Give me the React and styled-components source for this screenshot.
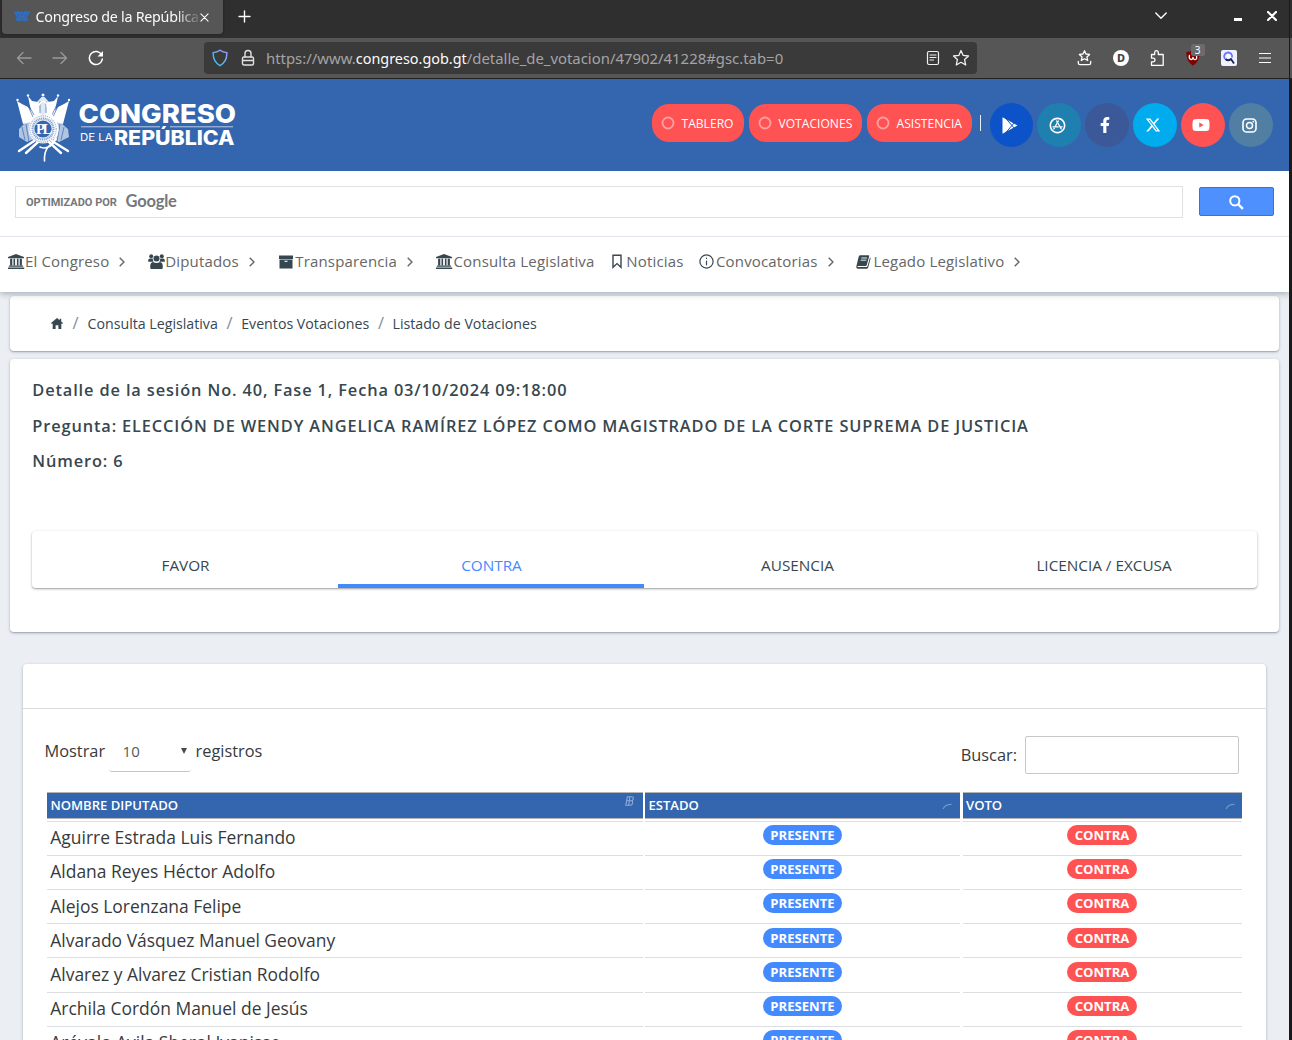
import React from 'react';
import styled, { createGlobalStyle, css } from 'styled-components';
import { FaFacebookF, FaYoutube } from 'react-icons/fa';
import { FaXTwitter } from 'react-icons/fa6';
import { RiAppStoreLine } from 'react-icons/ri';

const Global = createGlobalStyle`
  * { box-sizing: border-box; }
  html, body { margin: 0; height: 1040px; overflow: hidden; background: #1c1c1c; }
  svg { display: block; flex: none; }
`;

const Window = styled.div`
  width: 1292px;
  height: 1040px;
  overflow: hidden;
  font-family: "Open Sans", "Noto Sans", sans-serif;
`;

/* ---------- browser chrome ---------- */
const edge = 'linear-gradient(to right, transparent 1289px, #1a1a1a 1289px, #1a1a1a 1290px, transparent 1290px)';
const TabStrip = styled.div`
  height: 38px;
  display: flex;
  align-items: flex-start;
  background: ${edge}, #2f2f2f;
  color: #fbfbfe;
  font-family: "Noto Sans", sans-serif;
`;
const BrowserTab = styled.div`
  width: 221px;
  height: 34px;
  margin-left: 2px;
  padding: 0 13px 0 12px;
  display: flex;
  align-items: center;
  background: #565656;
  border-radius: 0 0 4px 4px;
  box-shadow: 0 0 3px rgba(0, 0, 0, 0.4);
`;
const TabTitle = styled.span`
  width: 162px;
  margin-left: 5.5px;
  margin-right: 2.5px;
  overflow: hidden;
  white-space: nowrap;
  font-size: 14.3px;
  letter-spacing: -0.27px;
  line-height: 20px;
  mask-image: linear-gradient(to right, #000 140px, transparent 166px);
`;
const NewTab = styled.div`
  margin: 10px 0 0 15px;
`;
const StripControls = styled.div`
  margin: 11px 15px 0 auto;
  display: flex;
  align-items: center;
`;
const Minimize = styled.span`
  width: 8px;
  height: 3px;
  margin: 6px 25px 0 67px;
  background: #fff;
`;
const Toolbar = styled.div`
  height: 41px;
  display: flex;
  align-items: center;
  background: ${edge}, #565656;
  border-bottom: 1px solid #222;
  font-family: "Noto Sans", sans-serif;
`;
const NavButtons = styled.div`
  width: 204px;
  padding-left: 16px;
  display: flex;
  align-items: center;
  gap: 20px;
`;
const UrlBar = styled.div`
  width: 773px;
  height: 32px;
  padding: 0 7px 0 8px;
  display: flex;
  align-items: center;
  gap: 13px;
  background: #3a3a3a;
  border-radius: 4px;
`;
const UrlText = styled.div`
  flex: 1;
  margin-left: -2px;
  font-size: 14.9px;
  line-height: 22px;
  color: #a4a4a6;
  white-space: nowrap;
`;
const UrlHost = styled.span`
  color: #fbfbfe;
  font-size: 14.4px;
`;
const UrlIcons = styled.div`
  display: flex;
  align-items: center;
  gap: 12px;
`;
const Extensions = styled.div`
  padding-left: 89.5px;
  display: grid;
  grid-template-columns: repeat(6, 36px);
  align-items: center;
  justify-items: center;
`;
const Blocker = styled.div`
  position: relative;
  width: 18px;
  height: 18px;
`;
const BlockCount = styled.span`
  position: absolute;
  left: 7px;
  top: -5px;
  width: 14px;
  height: 12px;
  border-radius: 2px;
  background: #6b6b6b;
  color: #fff;
  font-size: 10px;
  line-height: 12px;
  text-align: center;
`;

/* ---------- page ---------- */
const Page = styled.div`
  width: 1292px;
  height: 961px;
  background: #ebeef3;
  border-right: 3px solid #1a1a1a;
  overflow: hidden;
`;
const Header = styled.header`
  height: 92px;
  padding: 0 16px 0 14px;
  display: flex;
  align-items: center;
  justify-content: space-between;
  background: #3366ae;
`;
const HeaderLinks = styled.div`
  display: flex;
  align-items: center;
`;
const Pill = styled.a`
  width: ${(p) => p.$w}px;
  height: 38px;
  margin: -4px 5px 0 0;
  padding-left: 9px;
  display: flex;
  align-items: center;
  gap: 7px;
  border-radius: 17px;
  background: #ff5252;
  color: #fff;
  font-size: 12.1px;
`;
const Divider = styled.span`
  width: 1.5px;
  height: 16px;
  margin: -4px 9px 0 3px;
  background: #e6eef8;
`;
const Circle = styled.a`
  width: ${(p) => (p.$first ? 43 : 44)}px;
  height: 44px;
  margin-left: ${(p) => (p.$first ? 0 : 4)}px;
  padding-right: 4px;
  display: flex;
  align-items: center;
  justify-content: center;
  border-radius: 50%;
  background: ${(p) => p.$bg};
  color: #fff;
`;

const SearchRow = styled.div`
  height: 65px;
  padding: 15px 15px 0;
  display: flex;
  gap: 16px;
  background: #fff;
`;
const SearchBox = styled.div`
  width: 1168px;
  height: 32px;
  padding-left: 10px;
  display: flex;
  align-items: center;
  border: 1px solid #dfe1e5;
  color: #74777b;
`;
const Powered = styled.span`
  width: 99.5px;
  font: 700 11px Roboto, sans-serif;
`;
const Google = styled.span`
  margin-top: -2px;
  font: 700 16.5px Lato, sans-serif;
  letter-spacing: -0.2px;
`;
const SearchButton = styled.div`
  width: 75px;
  height: 29px;
  margin-top: 1px;
  padding-top: 1px;
  display: flex;
  align-items: center;
  justify-content: center;
  border: 1px solid #2f74ea;
  border-radius: 2px;
  background: #4d90fe;
  color: #fff;
`;

const MenuBar = styled.nav`
  position: relative;
  height: 56px;
  padding: 0 0 6px 8px;
  display: flex;
  align-items: center;
  background: #fff;
  border-top: 1px solid #e4e6ee;
  box-shadow: 0 2px 6px rgba(43, 61, 81, 0.35);
  clip-path: inset(0 0 -12px 0);
`;
const MenuItem = styled.a`
  width: ${(p) => p.$w}px;
  display: flex;
  align-items: center;
  color: #666;
  font-size: 15px;
  letter-spacing: 0.16px;
  line-height: 20px;
  white-space: nowrap;
`;
const MenuLabel = styled.span`
  padding-bottom: 2px;
`;
const MenuIcon = styled.span`
  width: ${(p) => p.$w}px;
  color: #37474f;
`;
const MenuArrow = styled.span`
  margin-left: 10px;
`;

const Card = styled.section`
  margin: 0 10px;
  background: #fff;
  border-radius: 4px;
  box-shadow: 0 1px 3px rgba(43, 61, 81, 0.32), 0 1px 1px rgba(43, 61, 81, 0.18);
`;
const Crumbs = styled(Card)`
  height: 55px;
  margin-top: 4px;
  padding: 0 0 0 41px;
  display: flex;
  align-items: center;
  font-size: 14.2px;
  color: #37474f;
`;
const Slash = styled.span`
  width: ${(p) => p.$w}px;
  margin-top: -3px;
  padding-left: ${(p) => p.$pad}px;
  color: #868e96;
  font-size: 16.5px;
`;
const Crumb = styled.a`
  width: ${(p) => p.$w}px;
  white-space: nowrap;
`;

const Detail = styled(Card)`
  height: 273px;
  margin-top: 8px;
  padding: 20px 22px 0;
`;
const DetailLine = styled.h5`
  height: 22px;
  margin: 0 0 13.6px;
  padding-left: 0.3px;
  color: #37474f;
  font-size: 16.36px;
  font-weight: 600;
  letter-spacing: 0.872px;
  line-height: 22px;
  white-space: nowrap;
`;
const Tabs = styled.div`
  height: 57px;
  margin: 59px 0 0;
  display: grid;
  grid-template-columns: repeat(3, 306px) 1fr;
  border-radius: 4px;
  box-shadow: 0 1px 3px rgba(0, 0, 0, 0.28), 0 1px 1px rgba(0, 0, 0, 0.14);
`;
const Tab = styled.div`
  display: flex;
  align-items: center;
  justify-content: center;
  padding: 15px 0 0 1px;
  border-bottom: 4px solid transparent;
  color: #37474f;
  font-size: 15.3px;
  ${(p) => p.$active && css`
    color: #448aff;
    border-bottom-color: #448aff;
  `}
`;

const Results = styled(Card)`
  height: 420px;
  margin: 32px 23px 0;
`;
const ResultsHead = styled.div`
  height: 45px;
  border-bottom: 1px solid #dcdcdc;
`;
const Controls = styled.div`
  height: 83px;
  padding: 26px 27px 0 21.5px;
  display: flex;
  justify-content: space-between;
  color: #373a3c;
  font-size: 16.35px;
  line-height: 22px;
`;
const LengthPicker = styled.div`
  display: flex;
  padding-top: 5px;
`;
const Select = styled.div`
  width: 81.5px;
  height: 32px;
  margin: 0 5px 0 4px;
  padding: 0 3.5px 0 13.5px;
  display: flex;
  justify-content: space-between;
  border-bottom: 1px solid #c4c4c4;
  border-radius: 3px;
  color: #55595c;
  font-size: 15px;
  line-height: 22px;
`;
const Caret = styled.span`
  width: 0;
  height: 0;
  margin-top: 8px;
  border: 3.5px solid transparent;
  border-top: 6px solid #4a4a4a;
  border-bottom: 0;
`;
const Filter = styled.div`
  display: flex;
  align-items: center;
  height: 40px;
  gap: 8px;
`;
const FilterInput = styled.div`
  width: 214px;
  height: 38px;
  border: 1px solid #c8c8c8;
  border-radius: 2px;
`;

const columns = css`
  display: grid;
  grid-template-columns: 596px 315px 280px;
  column-gap: 2px;
  margin-left: 24px;
`;
const HeadRow = styled.div`
  ${columns}
  height: 29px;
`;
const HeadCell = styled.div`
  height: 27px;
  margin-left: ${(p) => (p.$last ? 1 : 0)}px;
  padding: 0 ${(p) => (p.$last ? 8 : 9)}px 1px ${(p) => (p.$last ? 3 : 3.4)}px;
  display: flex;
  align-items: center;
  justify-content: space-between;
  background: #3366ae;
  border-top: 1px solid #b5b5b5;
  border-bottom: 1px solid #b5b5b5;
  color: #fff;
  font-size: 13.1px;
  font-weight: 600;
  line-height: 18px;
`;
const BodyRow = styled.div`
  ${columns}
  height: 34.12px;
`;
const Cell = styled.div`
  height: 34.12px;
  margin-left: ${(p) => (p.$last ? 1 : 0)}px;
  padding: ${(p) => (p.$center ? '3.2px 0 0' : '3.3px 0 0 3.3px')};
  ${(p) => p.$last && 'padding-right: 1px;'}
  text-align: ${(p) => (p.$center ? 'center' : 'left')};
  border-top: 1px solid #dcdee1;
  color: #373a3c;
  font-size: 17.45px;
  line-height: 24px;
  white-space: nowrap;
`;
const Badge = styled.span`
  display: block;
  width: ${(p) => (p.$red ? 70 : 79)}px;
  height: 20px;
  margin: 0 auto;
  border-radius: 10px;
  background: ${(p) => (p.$red ? '#ff5252' : '#448aff')};
  color: #fff;
  font-size: 13.1px;
  font-weight: 700;
  line-height: 21px;
`;

/* ---------- drawings ---------- */
const line = { fill: 'none', stroke: 'currentColor', strokeLinecap: 'round', strokeLinejoin: 'round' };

const Emblem = () => (
  <g>
    <path fill="currentColor" d="M1 8 L6 11 L12 14 L20 24 L15 29 L7 31 Z M12 3 L16 8 L22 9 L25 23 L19 26 L15 18 Z M42 3 L38 8 L32 9 L29 23 L36 27 L39 18 Z M53 8 L48 11 L42 14 L34 24 L39 29 L47 31 Z" />
    <path fill="currentColor" opacity=".85" d="M25.5 4 L28.5 4 L33 9 L31 22 L23 22 L21 9 Z" />
    <path fill="currentColor" opacity=".62" d="M9 30 L15 27 L18 46 L11 49 L3 44 L3 36 Z M45 30 L39 27 L36 46 L43 49 L53 44 L52 36 Z" />
    <g stroke="#3366ae" strokeWidth=".9" opacity=".75" fill="none">
      <path d="M6 34 L9 47 M10 31 L13 49 M48 34 L45 47 M44 31 L41 49 M11 9 L18 22 M42 9 L36 22 M24 8 V20 M30 8 V20 M12 13 L17 24 M42 13 L37 24" />
    </g>
    <g fill="currentColor"><circle cx="1.5" cy="7" r="1.2" /><circle cx="12" cy="2.5" r="1.2" /><circle cx="27" cy="2" r="1.5" /><circle cx="42" cy="2.5" r="1.2" /><circle cx="53" cy="7" r="1.2" /></g>
    <path {...line} strokeWidth="2.4" d="M18 48 L3 58 M22 49 L10 60 M36 48 L52 58 M33 49 L45 60" />
    <circle cx="27" cy="36" r="14.5" fill="currentColor" opacity=".92" />
    <circle cx="27" cy="36" r="13.2" fill="none" stroke="#3366ae" strokeWidth=".9" strokeDasharray="1 1.2" opacity=".7" />
    <circle cx="27" cy="36" r="10.4" fill="none" stroke="#3366ae" strokeWidth="2.2" strokeDasharray="1 .8" opacity=".6" />
    <circle cx="27" cy="36" r="8.6" fill="#3366ae" />
    <path {...line} strokeWidth="1.6" d="M23 12 Q27 5 31 11 Q31 16 35 21 Q42 30 42 37 Q41 47 32 54 Q28 59 28.5 68 M40 46 Q33 58 24 54" />
  </g>
);

const Logo = () => (
  <svg width="224" height="76" viewBox="0 0 224 76" color="#fff" fontFamily="Inter, 'Open Sans', sans-serif" fill="#fff">
    <g transform="translate(2 6)"><Emblem /></g>
    <text x="22" y="47" fontFamily="'Liberation Serif', serif" fontWeight="700" fontSize="14.5" letterSpacing="-2.4">PL</text>
    <text x="64.5" y="36" fontWeight="800" fontSize="25.5" textLength="157.5" lengthAdjust="spacingAndGlyphs">CONGRESO</text>
    <path d="M67 39.8 H146 M156 39.8 H219" stroke="#b8cce8" strokeWidth="1" />
    <text x="66" y="54" fontWeight="400" fontSize="10.8" textLength="32.5" lengthAdjust="spacingAndGlyphs">DE LA</text>
    <text x="100" y="57.7" fontWeight="800" fontSize="19.6" textLength="120.5" lengthAdjust="spacingAndGlyphs">REPÚBLICA</text>
  </svg>
);

const Favicon = () => (
  <svg width="16" height="16" viewBox="0 0 16 16">
    <path fill="#2b6fc9" d="M0 2 L3 3 L4.5 1.5 L6 3.5 L8 2.5 L10 3.5 L11.5 1.5 L13 3 L16 2 L15 5 L13.5 7.5 L14.5 11 L11.5 12.5 L8 11.5 L4.5 12.5 L1.5 11 L2.5 7.5 L1 5 Z" />
    <path d="M3 4 L6 8 M13 4 L10 8 M8 4 V7 M3 9.5 L5 11.5 M13 9.5 L11 11.5 M6.5 9.5 H9.5 M1 8 L4 8.5 M15 8 L12 8.5" stroke="#565656" strokeWidth="1" opacity=".8" />
  </svg>
);
const Cross = ({ size, w }) => (
  <svg width={size} height={size} viewBox="0 0 10 10" color="#fff"><path {...line} strokeWidth={w} d="M1 1 L9 9 M9 1 L1 9" /></svg>
);
const Arrow = ({ flip }) => (
  <svg width="16" height="16" viewBox="0 0 16 16" color="#999" transform={flip ? 'scale(-1 1)' : undefined}>
    <path {...line} strokeWidth="1.4" d="M15 8 H1.5 M7 2.5 L1.5 8 L7 13.5" />
  </svg>
);
const Reload = () => (
  <svg width="16" height="16" viewBox="0 0 16 16" color="#fff">
    <path {...line} strokeWidth="1.5" d="M13.8 5.3 A6.5 6.5 0 1 0 14.3 9" />
    <path fill="#fff" d="M15 1 V6.5 H9.5 Z" />
  </svg>
);
const Shield = () => (
  <svg width="16" height="18" viewBox="0 0 16 18">
    <defs><linearGradient id="shield" x1="0" y1="1" x2="1" y2="0"><stop offset="0" stopColor="#23c9f0" /><stop offset="1" stopColor="#a99aff" /></linearGradient></defs>
    <path d="M8 1.2 Q11 3.3 14.8 3.6 Q15.3 12.5 8 16.6 Q.7 12.5 1.2 3.6 Q5 3.3 8 1.2 Z" fill="none" stroke="url(#shield)" strokeWidth="1.4" />
  </svg>
);
const Lock = () => (
  <svg width="14" height="18" viewBox="0 0 14 18" color="#e2e2e4">
    <rect {...line} strokeWidth="1.4" x="1.5" y="8" width="11" height="8" rx="1.5" />
    <path {...line} strokeWidth="1.4" d="M4 8 V4.5 A3 3 0 0 1 10 4.5 V8 M2 11.5 H12" />
  </svg>
);
const Reader = () => (
  <svg width="14" height="16" viewBox="0 0 14 16" color="#f0f0f2">
    <rect {...line} strokeWidth="1.2" x="1.5" y="1.5" width="11" height="13" rx="1.5" />
    <path {...line} strokeWidth="1.2" d="M4 5 H10 M4 7.5 H10 M4 10 H7.5" />
  </svg>
);
const Star = () => (
  <svg width="18" height="18" viewBox="0 0 18 18" color="#f0f0f2">
    <path {...line} strokeWidth="1.3" d="M9 1.5 L11.2 6.4 L16.5 7 L12.6 10.6 L13.7 16 L9 13.3 L4.3 16 L5.4 10.6 L1.5 7 L6.8 6.4 Z" />
  </svg>
);
const SavedStar = () => (
  <svg width="15" height="18" viewBox="0 0 15 18" color="#fff">
    <path {...line} strokeWidth="1.3" d="M7.5 1.7 L9 5 L12.6 5.4 L9.9 7.9 L10.7 11.5 L7.5 9.8 L4.3 11.5 L5.1 7.9 L2.4 5.4 L6 5 Z M1.3 12.5 V14 Q1.3 15.7 3 15.7 H12 Q13.7 15.7 13.7 14 V12.5" />
  </svg>
);
const Puzzle = () => (
  <svg width="16" height="18" viewBox="0 0 16 18" color="#fff">
    <path {...line} strokeWidth="1.3" d="M2.5 5.5 H5.7 V3.5 A1.8 1.8 0 0 1 9.3 3.5 V5.5 H14.2 V16.3 H2.5 V12.8 H4.2 A1.8 1.8 0 0 0 4.2 9.2 H2.5 Z" />
  </svg>
);
const DotD = () => (
  <svg width="18" height="18" viewBox="0 0 18 18">
    <circle cx="9" cy="9" r="8" fill="#fff" />
    <text x="9" y="13.2" textAnchor="middle" fontFamily="'Noto Sans', sans-serif" fontWeight="800" fontSize="11" fill="#444">D</text>
  </svg>
);
const BlockShield = () => (
  <svg width="18" height="18" viewBox="0 0 18 18">
    <path fill="#800000" d="M9 1 Q12 3 15.7 3 Q16 12.5 9 16.7 Q2 12.5 2.3 3 Q6 3 9 1 Z" />
    <path {...line} stroke="#fff" strokeWidth="1.3" d="M5.4 6.5 C4.4 11.5 8.8 11.5 9 8.4 C9.2 11.5 13.6 11.5 12.6 7.5" />
  </svg>
);
const Lens = () => (
  <svg width="16" height="16" viewBox="0 0 16 16">
    <rect width="16" height="16" rx="2" fill="#f0f1ff" />
    <path d="M4 9 A4 4 0 1 1 11 7.5" fill="none" stroke="#6679f5" strokeWidth="1.8" />
    <path d="M4.5 9 Q7 11.5 10 9 L13 13.5" fill="none" stroke="#1c2452" strokeWidth="1.8" />
    <circle cx="8" cy="6.5" r="1.8" fill="#fff" />
  </svg>
);
const Burger = () => (
  <svg width="12" height="12" viewBox="0 0 12 12" color="#fff"><path {...line} strokeLinecap="butt" strokeWidth="1.2" d="M0 1.5 H12 M0 6 H12 M0 10.5 H12" /></svg>
);
const SearchGlyph = () => (
  <svg width="15" height="15" viewBox="0 0 15 15" color="#fff">
    <circle {...line} strokeWidth="2" cx="5.8" cy="5.8" r="4.6" />
    <path {...line} strokeLinecap="butt" strokeWidth="2.4" d="M8.8 8.8 L13.9 13.9" />
  </svg>
);
const Play = () => (
  <svg width="16" height="17" viewBox="0 0 16 17">
    <path fill="#fff" d="M.5 0.3 L15.5 8.5 L.5 16.7 Z" />
    <path d="M3.5 1 L12.5 11.5 M3.5 16 L12.5 5.5" stroke="#0c52c9" strokeWidth="1" />
  </svg>
);
const Insta = () => (
  <svg width="15" height="15" viewBox="0 0 15 15" color="#fff">
    <rect {...line} strokeWidth="1.6" x="1" y="1" width="13" height="13" rx="3.6" />
    <circle {...line} strokeWidth="1.5" cx="7.5" cy="7.5" r="3" /><circle cx="11.3" cy="3.7" r=".9" fill="#fff" />
  </svg>
);
const Ring = () => (
  <svg width="14" height="14" viewBox="0 0 14 14"><circle cx="7" cy="7" r="5.5" fill="none" stroke="#ffa0a0" strokeWidth="1.8" /></svg>
);
const Chevron = ({ down }) => down ? (
  <svg width="12" height="8" viewBox="0 0 12 8" color="#fff"><path {...line} strokeWidth="1.4" d="M.8 1 L6 6.2 L11.2 1" /></svg>
) : (
  <svg width="6" height="10" viewBox="0 0 6 10"><path {...line} strokeLinecap="butt" strokeWidth="1.4" d="M.7 .7 L5 5 L.7 9.3" /></svg>
);

const icons = {
  bank: (
    <svg width="17" height="15" viewBox="0 0 17 15" fill="currentColor">
      <path d="M8 0 L16 3 V4.2 H0 V3 Z M2.1 4.8 H4.3 V11.2 H2.1 Z M5.5 4.8 H7.1 V11.2 H5.5 Z M8.9 4.8 H10.5 V11.2 H8.9 Z M11.7 4.8 H13.9 V11.2 H11.7 Z M.9 11.6 H15.1 V12.8 H.9 Z M0 13.4 H16.2 V15 H0 Z" />
    </svg>
  ),
  users: (
    <svg width="17" height="15" viewBox="0 0 17 15" fill="currentColor">
      <circle cx="3.2" cy="2.2" r="2" /><circle cx="13.8" cy="2.2" r="2" /><circle cx="8.5" cy="4.6" r="3" />
      <path d="M.2 7.8 V6.2 Q.2 4.5 2 4.5 H4.7 Q4.8 6.6 5.6 7.8 Z M16.8 7.8 V6.2 Q16.8 4.5 15 4.5 H12.3 Q12.2 6.6 11.4 7.8 Z M3 15 Q2.2 15 2.2 12.5 Q2.2 8.3 5 8 Q8.5 9.8 12 8 Q14.8 8.3 14.8 12.5 Q14.8 15 14 15 Z" />
    </svg>
  ),
  archive: (
    <svg width="14" height="14" viewBox="0 0 14 14">
      <path fill="currentColor" d="M0 .5 H14 V4 H0 Z M.5 4.6 H13.5 V13.5 H.5 Z" /><path d="M5.5 6.3 H8.5" stroke="#fff" strokeWidth="1.1" />
    </svg>
  ),
  bookmark: (
    <svg width="12" height="15" viewBox="0 0 12 15"><path {...line} strokeLinejoin="miter" strokeWidth="1.4" d="M2 1.2 H10 V13.3 L6 9.6 L2 13.3 Z" /></svg>
  ),
  info: (
    <svg width="15" height="15" viewBox="0 0 15 15"><circle {...line} strokeWidth="1.2" cx="7.5" cy="7.5" r="6.6" /><path {...line} strokeWidth="1.2" d="M7.5 4 V4.4 M7.5 7 V10.8" /></svg>
  ),
  book: (
    <svg width="15" height="14" viewBox="0 0 15 14">
      <path fill="currentColor" d="M4 .3 H12.5 Q13.5 .3 13.2 1.3 L10.7 10.2 Q10.5 11 9.6 11 H2 Q1.3 11 1.6 11.7 Q1.8 12 2.3 12 H10.6 Q11.3 12 11.5 11.2 L14 2.6 Q14.8 3 14.5 3.9 L12.2 12.4 Q11.8 13.7 10.5 13.7 H1.8 Q-.2 13.2 .5 10.8 L2.6 2 Q3 .3 4 .3 Z" />
      <path d="M5.3 3 H11 M4.7 5.2 H10.4" stroke="#fff" strokeWidth=".9" />
    </svg>
  ),
};
const Home = () => (
  <svg width="12" height="11" viewBox="0 0 12 11"><path fill="#37474f" d="M6 0 L8.7 2.2 V.8 H10.2 V3.5 L12 5 L11.2 6 L10.3 5.4 V11 H7.4 V7.2 H4.6 V11 H1.7 V5.4 L.8 6 L0 5 Z" /></svg>
);
const SortGlyph = () => (
  <svg width="9" height="10" viewBox="0 0 9 10"><path d="M2.4 .7 H6.8 Q8.6 .8 8.2 2.8 Q7.9 4.5 6.6 4.8 Q8 5.2 7.6 7.2 Q7.2 9.3 5.2 9.3 H.8 Z M4.9 .7 L3.7 9.3 M1.7 4.8 H6.6" fill="none" stroke="#8eabd6" strokeWidth="1.1" /></svg>
);
const ArcGlyph = () => (
  <svg width="10" height="7" viewBox="0 0 10 7"><path d="M1.2 6 Q3 1.3 9.5 1.4" fill="none" stroke="#7296ca" strokeWidth="1.2" /></svg>
);
const SortSlot = styled.span`
  margin: ${(p) => (p.$up ? '-9px 0 0 0' : '2px -1px 0 0')};
`;

/* ---------- data ---------- */
const menu = [
  ['El Congreso', 'bank', 140, 17, true],
  ['Diputados', 'users', 130.5, 17.3, true],
  ['Transparencia', 'archive', 157.5, 16.8, true],
  ['Consulta Legislativa', 'bank', 175, 17.5, false],
  ['Noticias', 'bookmark', 88, 15.3, false],
  ['Convocatorias', 'info', 157, 17, true],
  ['Legado Legislativo', 'book', 170, 17.5, true],
];
const detail = [
  'Detalle de la sesión No. 40, Fase 1, Fecha 03/10/2024 09:18:00',
  'Pregunta: ELECCIÓN DE WENDY ANGELICA RAMÍREZ LÓPEZ COMO MAGISTRADO DE LA CORTE SUPREMA DE JUSTICIA',
  'Número: 6',
];
const people = [
  'Aguirre Estrada Luis Fernando',
  'Aldana Reyes Héctor Adolfo',
  'Alejos Lorenzana Felipe',
  'Alvarado Vásquez Manuel Geovany',
  'Alvarez y Alvarez Cristian Rodolfo',
  'Archila Cordón Manuel de Jesús',
  'Arévalo Avila Sherol Ivanisse',
];

export default function App() {
  return (
    <Window>
      <Global />
      <TabStrip>
        <BrowserTab>
          <Favicon />
          <TabTitle>Congreso de la República</TabTitle>
          <Cross size={9} w={1.2} />
        </BrowserTab>
        <NewTab>
          <svg width="13" height="13" viewBox="0 0 13 13" color="#fff"><path {...line} strokeWidth="1.4" d="M6.5 1 V12 M1 6.5 H12" /></svg>
        </NewTab>
        <StripControls>
          <Chevron down />
          <Minimize />
          <Cross size={10} w={2.2} />
        </StripControls>
      </TabStrip>
      <Toolbar>
        <NavButtons><Arrow /><Arrow flip /><Reload /></NavButtons>
        <UrlBar>
          <Shield />
          <Lock />
          <UrlText>https://www.<UrlHost>congreso.gob.gt</UrlHost>/detalle_de_votacion/47902/41228#gsc.tab=0</UrlText>
          <UrlIcons><Reader /><Star /></UrlIcons>
        </UrlBar>
        <Extensions>
          <SavedStar />
          <DotD />
          <Puzzle />
          <Blocker><BlockShield /><BlockCount>3</BlockCount></Blocker>
          <Lens />
          <Burger />
        </Extensions>
      </Toolbar>
      <Page>
        <Header>
          <Logo />
          <HeaderLinks>
            <Pill $w={92}><Ring />TABLERO</Pill>
            <Pill $w={113}><Ring />VOTACIONES</Pill>
            <Pill $w={105}><Ring />ASISTENCIA</Pill>
            <Divider />
            <Circle $first $bg="#0c52c9"><Play /></Circle>
            <Circle $bg="#1f80b0"><RiAppStoreLine size={19} /></Circle>
            <Circle $bg="#3b5998"><FaFacebookF size={16} /></Circle>
            <Circle $bg="#00aced"><FaXTwitter size={16} /></Circle>
            <Circle $bg="#ff5252"><FaYoutube size={18} /></Circle>
            <Circle $bg="#517fa4"><Insta /></Circle>
          </HeaderLinks>
        </Header>
        <SearchRow>
          <SearchBox><Powered>OPTIMIZADO POR</Powered><Google>Google</Google></SearchBox>
          <SearchButton><SearchGlyph /></SearchButton>
        </SearchRow>
        <MenuBar>
          {menu.map(([label, icon, w, iw, arrow]) => (
            <MenuItem key={label} $w={w}>
              <MenuIcon $w={iw}>{icons[icon]}</MenuIcon>
              <MenuLabel>{label}</MenuLabel>
              {arrow && <MenuArrow><Chevron /></MenuArrow>}
            </MenuItem>
          ))}
        </MenuBar>
        <Crumbs as="nav">
          <Home />
          <Slash $w={24.5} $pad={9.5}>/</Slash>
          <Crumb $w={130}>Consulta Legislativa</Crumb>
          <Slash $w={23.7} $pad={9}>/</Slash>
          <Crumb $w={128.3}>Eventos Votaciones</Crumb>
          <Slash $w={23} $pad={8.5}>/</Slash>
          <Crumb $w={150}>Listado de Votaciones</Crumb>
        </Crumbs>
        <Detail>
          {detail.map((t) => <DetailLine key={t}>{t}</DetailLine>)}
          <Tabs>
            <Tab>FAVOR</Tab>
            <Tab $active>CONTRA</Tab>
            <Tab>AUSENCIA</Tab>
            <Tab>LICENCIA / EXCUSA</Tab>
          </Tabs>
        </Detail>
        <Results>
          <ResultsHead />
          <Controls>
            <LengthPicker>
              Mostrar
              <Select>10<Caret /></Select>
              registros
            </LengthPicker>
            <Filter>Buscar:<FilterInput /></Filter>
          </Controls>
          <HeadRow>
            <HeadCell>NOMBRE DIPUTADO<SortSlot $up><SortGlyph /></SortSlot></HeadCell>
            <HeadCell>ESTADO<SortSlot><ArcGlyph /></SortSlot></HeadCell>
            <HeadCell $last>VOTO<SortSlot><ArcGlyph /></SortSlot></HeadCell>
          </HeadRow>
          {people.map((name) => (
            <BodyRow key={name}>
              <Cell>{name}</Cell>
              <Cell $center><Badge>PRESENTE</Badge></Cell>
              <Cell $center $last><Badge $red>CONTRA</Badge></Cell>
            </BodyRow>
          ))}
        </Results>
      </Page>
    </Window>
  );
}
